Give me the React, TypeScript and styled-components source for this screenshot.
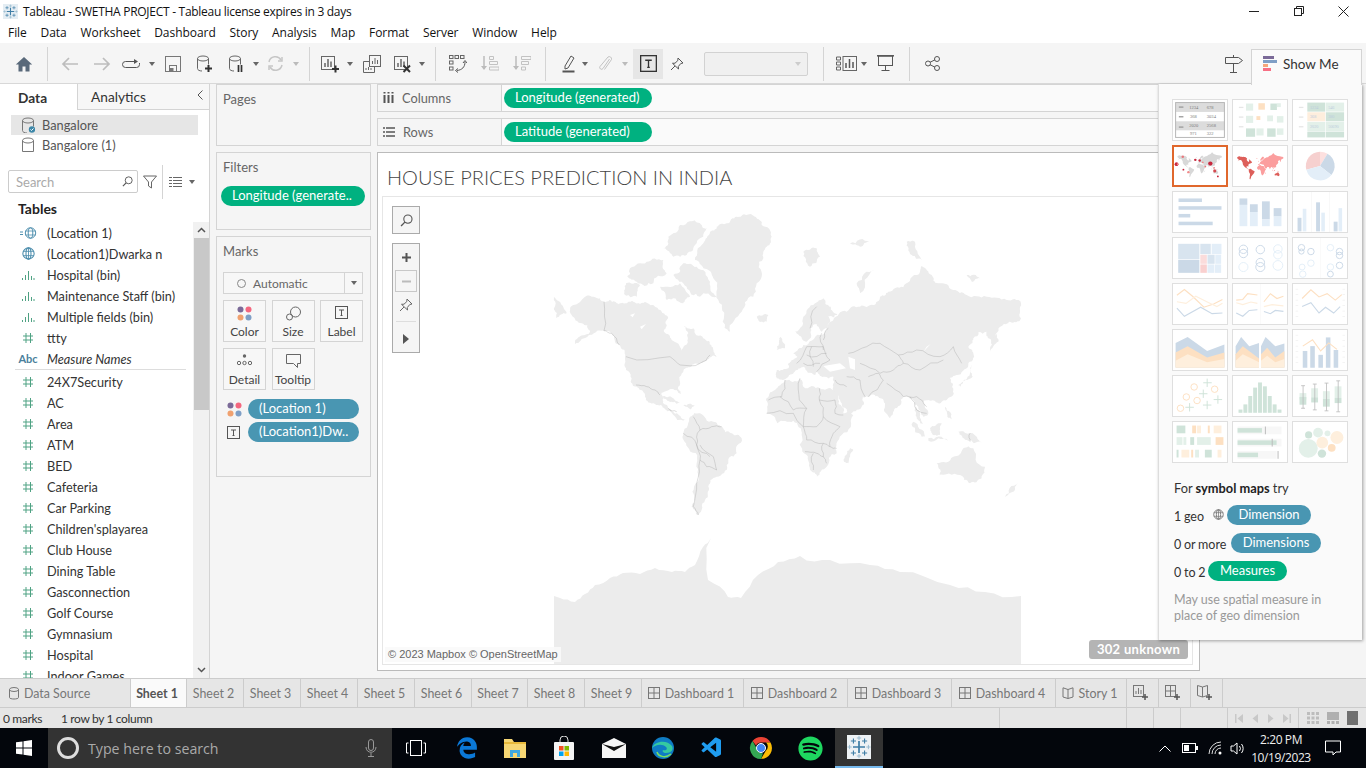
import React from "react";
import styled, { createGlobalStyle } from "styled-components";
import { FaSpotify, FaEdgeLegacy } from "react-icons/fa";
import { VscVscode } from "react-icons/vsc";

const Global = createGlobalStyle`
  html, body { margin: 0; padding: 0; background: #f5f5f5; }
  * { box-sizing: border-box; }
`;
const BOOK = `Lato, "Open Sans", sans-serif`;
const SEGOE = `"Open Sans", "Noto Sans", sans-serif`;

const Page = styled.div`
  width: 1366px; height: 768px; position: relative; overflow: hidden;
  display: flex; flex-direction: column; background: #f5f5f5; font-family: ${BOOK}; color: #333;
`;
const TitleBar = styled.div`
  height: 22px; background: #fff; display: flex; align-items: center; padding-left: 3px;
  font: 12px ${SEGOE}; color: #111; flex: none; letter-spacing: -0.28px;
`;
const TitleLogo = styled.div` width: 15px; height: 15px; background: #e4edf3; flex: none; `;
const TitleText = styled.span` margin-left: 5px; `;
const WinControls = styled.div` margin-left: auto; display: flex; align-items: center; `;
const WinBtn = styled.div` width: 45px; height: 22px; display: flex; align-items: center; justify-content: center; `;
const MenuBar = styled.div`
  height: 21px; background: #fff; display: flex; align-items: center; padding-left: 8px; gap: 13.8px;
  font: 12px ${SEGOE}; color: #111; flex: none; letter-spacing: -0.05px;
`;
const Toolbar = styled.div`
  height: 41px; background: #f5f5f5; display: flex; align-items: center; padding: 1px 0 0 8px; flex: none;
  border-bottom: 1px solid #d8d8d8; position: relative;
`;
const Slot = styled.div<{ $w: number; $ml?: number; $on?: boolean }>`
  width: ${p => p.$w}px; height: 30px; margin-left: ${p => p.$ml || 0}px; flex: none;
  display: flex; align-items: center; justify-content: center; background: ${p => (p.$on ? "#e6e6e6" : "transparent")};
`;
const Sep = styled.div<{ $ml: number; $mr: number }>`
  width: 1px; height: 34px; background: #d4d4d4; margin: 0 ${p => p.$mr}px 0 ${p => p.$ml}px; flex: none;
`;
const Caret = styled.div<{ $c?: string }>`
  width: 0; height: 0; border-left: 3.5px solid transparent; border-right: 3.5px solid transparent;
  border-top: 4px solid ${p => p.$c || "#666"};
`;
const Combo = styled.div`
  width: 104px; height: 24px; margin-left: 13px; border: 1px solid #d2d2d2; border-radius: 2px; background: #f0f0f0;
  display: flex; align-items: center; justify-content: flex-end; padding-right: 6px; flex: none;
`;
const Workspace = styled.div` height: 594px; display: flex; flex: none; `;
const DataPane = styled.div`
  width: 210px; background: #fff; border-right: 1px solid #d4d4d4; display: flex; flex-direction: column; flex: none;
`;
const PaneTabs = styled.div` height: 26px; display: flex; flex: none; `;
const PaneTab = styled.div<{ $on?: boolean; $w: number }>`
  width: ${p => p.$w}px; display: flex; align-items: center; font-size: 13.7px; padding-left: ${p => (p.$on ? 18 : 13)}px;
  font-weight: ${p => (p.$on ? 700 : 400)}; color: #333; background: ${p => (p.$on ? "#fff" : "#f7f7f7")};
  border-bottom: ${p => (p.$on ? "none" : "1px solid #d4d4d4")};
  border-left: ${p => (p.$on ? "none" : "1px solid #d4d4d4")}; position: relative;
`;
const Chevron = styled.div` position: absolute; right: 5px; top: 5px; display: flex; `;
const Sources = styled.div` padding: 5px 11px 0; height: 60px; flex: none; `;
const SourceRow = styled.div<{ $on?: boolean }>`
  height: 20px; width: 187px; display: flex; align-items: center; gap: 7px; padding-left: 10px; font-size: 12.8px; color: #555;
  background: ${p => (p.$on ? "#e6e6e6" : "transparent")};
`;
const SearchRow = styled.div` display: flex; align-items: center; padding-left: 8px; height: 23px; flex: none; `;
const SearchBox = styled.div`
  width: 130px; height: 23px; border: 1px solid #ccc; border-radius: 2px; display: flex; align-items: center;
  justify-content: space-between; padding: 0 4px 0 7px; color: #aaa; font-size: 13px; background: #fff;
`;
const TablesHead = styled.div` font-weight: 700; font-size: 14px; color: #222; padding: 7px 0 0 18px; height: 29px; flex: none; `;
const FieldArea = styled.div` flex: 1; display: flex; min-height: 0; overflow: hidden; `;
const FieldList = styled.div` width: 193px; flex: none; padding-top: 0; `;
const FieldRow = styled.div<{ $i?: boolean }>`
  height: 21px; display: flex; align-items: center; font-size: 12.7px; color: #333; white-space: nowrap;
  font-style: ${p => (p.$i ? "italic" : "normal")};
`;
const FieldIcon = styled.div` width: 47px; flex: none; display: flex; justify-content: center; padding-left: 9px; padding-right: 0; `;
const AbcIcon = styled.span` font-size: 11px; font-weight: 700; font-style: normal; color: #4a7f9c; `;
const FieldDivider = styled.div` height: 1px; background: #ddd; margin: 0 7px 1px 15px; `;
const ScrollBar = styled.div` width: 16px; background: #f1f1f1; flex: none; display: flex; flex-direction: column; align-items: center; `;
const ScrollEnd = styled.div` height: 16px; display: flex; align-items: center; justify-content: center; flex: none; `;
const ScrollThumb = styled.div` width: 15px; height: 172px; background: #c8c8c8; flex: none; `;
const ScrollRest = styled.div` flex: 1; `;
const ShelfCol = styled.div` width: 155px; margin-left: 6px; display: flex; flex-direction: column; gap: 6px; flex: none; `;
const Card = styled.div<{ $h: number }>`
  height: ${p => p.$h}px; border: 1px solid #d4d4d4; background: #f5f5f5; padding: 6px 4px 0 6px; flex: none;
`;
const CardTitle = styled.div` font-size: 13px; color: #666; padding-left: 0; line-height: 16px; `;
const Pill = styled.div<{ $c: "g" | "b"; $w: number }>`
  width: ${p => p.$w}px; height: 20px; border-radius: 10px; flex: none; color: #fff; font-size: 13px; line-height: 19px;
  padding-left: 11px; white-space: nowrap; overflow: hidden; background: ${p => (p.$c === "g" ? "#00b180" : "#4996b2")};
`;
const FilterPillWrap = styled.div` margin: 11px 0 0 -2px; `;
const MarkType = styled.div`
  margin: 13px 0 0 0; width: 140px; height: 22px; border: 1px solid #d4d4d4; background: #f7f7f7; display: flex; align-items: center;
  font-size: 12px; color: #666; padding-left: 13px; gap: 7px; position: relative;
`;
const MarkDrop = styled.div`
  position: absolute; right: 0; top: 0; bottom: 0; width: 18px; border-left: 1px solid #d4d4d4; display: flex; align-items: center; justify-content: center;
`;
const MarkCircle = styled.div` width: 9px; height: 9px; border: 1px solid #888; border-radius: 50%; `;
const MarkGrid = styled.div` display: grid; grid-template-columns: 43px 43px 43px; column-gap: 5.5px; row-gap: 6px; margin-top: 6px; `;
const MarkBtn = styled.div`
  height: 42px; border: 1px solid #d4d4d4; background: #f7f7f7; display: flex; flex-direction: column; align-items: center;
  font-size: 12px; color: #444; padding-top: 5px; justify-content: space-between; padding-bottom: 2px;
`;
const MarkPills = styled.div` margin-top: 9px; display: flex; flex-direction: column; gap: 3px; `;
const MarkPillRow = styled.div` display: flex; align-items: center; gap: 0; `;
const MarkPillIcon = styled.div` width: 25px; padding-left: 4px; display: flex; flex: none; `;
const Right = styled.div` width: 823px; margin-left: 6px; display: flex; flex-direction: column; flex: none; `;
const Shelf = styled.div<{ $mb: number }>`
  height: 28px; margin-bottom: ${p => p.$mb}px; border: 1px solid #d4d4d4; background: #fafafa; display: flex; flex: none; width: 900px;
`;
const ShelfLabel = styled.div`
  width: 124px; background: #f5f5f5; border-right: 1px solid #d4d4d4; display: flex; align-items: center; font-size: 12.8px; color: #666; gap: 8px; padding-left: 5px; padding-bottom: 1px; flex: none;
`;
const ShelfPills = styled.div` display: flex; align-items: center; padding-left: 2px; `;
const View = styled.div`
  height: 519px; background: #fff; border: 1px solid #bbb; display: flex; flex-direction: column; padding: 0 6px 5px 4px; flex: none;
`;
const ViewTitle = styled.div` height: 43px; flex: none; padding: 12px 0 0 5px; font-size: 20px; font-weight: 300; color: #444; line-height: 24px; white-space: nowrap; `;
const MapFrame = styled.div` flex: 1; border: 1px solid #e6e6e6; position: relative; overflow: hidden; `;
const MapSvg = styled.svg` position: absolute; left: 157px; top: 3px; filter: blur(.35px); `;
const MapTool = styled.div`
  position: absolute; left: 9px; width: 28px; border: 1px solid #aaa; background: #f5f5f5; display: flex; flex-direction: column; align-items: center;
`;
const MapToolSearch = styled(MapTool)` top: 9px; height: 28px; justify-content: center; `;
const MapToolGroup = styled(MapTool)` top: 46px; height: 110px; `;
const ToolCell = styled.div<{ $h: number; $box?: boolean }>`
  height: ${p => p.$h}px; width: ${p => (p.$box ? "22px" : "100%")}; display: flex; align-items: center; justify-content: center;
  border: ${p => (p.$box ? "1px solid #c8c8c8" : "none")}; flex: none;
`;
const ToolRule = styled.div` width: 20px; height: 1px; background: #ddd; margin: 4px 0 4px; flex: none; `;
const Attribution = styled.div`
  position: absolute; left: 2px; bottom: 2px; height: 15px; padding: 0 3px; background: rgba(250,250,250,.9);
  font: 11px/15px "Liberation Sans", Arial, sans-serif; color: #666;
`;
const Unknown = styled.div`
  position: absolute; right: 4px; bottom: 5px; width: 99px; height: 19px; background: #b4b4b4; border-radius: 3px;
  color: #fff; font-weight: 700; font-size: 13px; line-height: 18px; text-align: center; letter-spacing: .3px;
`;
const ShowMeTab = styled.div`
  position: absolute; left: 1251px; top: 49px; width: 111px; height: 36px; background: #fafafa; border: 1px solid #d4d4d4;
  border-bottom: none; display: flex; align-items: center; padding: 0 0 8px 11px; gap: 5px; font-size: 13.5px; color: #333; z-index: 3;
`;
const ShowMePanel = styled.div`
  position: absolute; left: 1158px; top: 84px; width: 204px; height: 556px; background: #fafafa;
  box-shadow: 1px 1px 3px rgba(0,0,0,.35); border-left: 1px solid #ddd; padding: 15px 0 0 13px; z-index: 2; font-size: 13px; color: #333;
`;
const ThumbGrid = styled.div` display: grid; grid-template-columns: repeat(3, 56px); grid-auto-rows: 42px; gap: 4px; `;
const Thumb = styled.div<{ $on?: boolean }>`
  border: ${p => (p.$on ? "2px solid #e0672c" : "1px solid #dfdfdf")}; background: #fff; overflow: hidden; display: flex;
`;
const ThumbSvg = styled.svg` width: 100%; height: 100%; display: block; `;
const HintHead = styled.div` margin: 17px 0 0 2px; font-size: 12.8px; line-height: 17px; color: #333; `;
const Strong = styled.b` font-weight: 700; color: #222; `;
const HintRow = styled.div` display: flex; align-items: center; height: 20px; margin: 8px 0 0 2px; color: #333; font-size: 12.5px; `;
const HintLabel = styled.span<{ $w: number }>` width: ${p => p.$w}px; flex: none; padding-top: 3px; display: flex; align-items: center; white-space: nowrap; word-spacing: -.5px; `;
const HintGlobe = styled.span` margin-left: 9px; margin-top: -4px; `;
const HintPill = styled.div<{ $c: "g" | "b"; $w: number }>`
  width: ${p => p.$w}px; height: 20px; border-radius: 10px; color: #fff; text-align: center; line-height: 19px; font-size: 13px;
  background: ${p => (p.$c === "g" ? "#00b180" : "#4996b2")};
`;
const Note = styled.div` margin: 11px 0 0 2px; width: 170px; color: #999; font-size: 12.5px; line-height: 16px; `;
const SheetTabs = styled.div`
  height: 30px; display: flex; background: #e6e6e6; border-top: 1px solid #ccc; border-bottom: 1px solid #ccc; flex: none;
`;
const SheetTab = styled.div<{ $w: number; $on?: boolean }>`
  width: ${p => p.$w}px; flex: none; display: flex; align-items: center; justify-content: center; gap: 5px; font-size: 12.4px; padding-right: 3px;
  border-right: 1px solid #ccc; color: ${p => (p.$on ? "#555" : "#777")}; font-weight: ${p => (p.$on ? 700 : 400)};
  background: ${p => (p.$on ? "#fafafa" : "transparent")}; white-space: nowrap;
`;
const SourceTab = styled(SheetTab)` justify-content: flex-start; padding-left: 9px; `;
const StatusBar = styled.div` height: 20px; background: #e6e6e6; display: flex; align-items: center; flex: none; font-size: 12px; color: #333; letter-spacing: -.35px; `;
const StatusText = styled.span<{ $w: number }>` width: ${p => p.$w}px; flex: none; padding-left: 3px; white-space: nowrap; `;
const StatusCell = styled.div<{ $w: number }>`
  width: ${p => p.$w}px; height: 20px; border-left: 1px solid #ccc; flex: none; display: flex; align-items: center; justify-content: center; gap: 8px;
`;
const Taskbar = styled.div` height: 40px; background: #03060c; display: flex; align-items: center; flex: none; color: #fff; `;
const StartBtn = styled.div` width: 48px; height: 40px; display: flex; align-items: center; justify-content: center; flex: none; `;
const TaskSearch = styled.div`
  width: 344px; height: 40px; background: #333; display: flex; align-items: center; padding-left: 9px; color: #aaa;
  font: 14.2px ${SEGOE}; flex: none; position: relative;
`;
const Cortana = styled.div` width: 22px; height: 22px; border-radius: 50%; border: 3px solid #ddd; margin-right: 9px; `;
const MicWrap = styled.div` position: absolute; right: 15px; top: 11px; display: flex; `;
const TaskIcon = styled.div<{ $w: number; $ml?: number; $on?: boolean }>`
  width: ${p => p.$w}px; margin-left: ${p => p.$ml || 0}px; height: 40px; display: flex; align-items: center; justify-content: center; flex: none;
  background: ${p => (p.$on ? "#333" : "transparent")}; border-bottom: ${p => (p.$on ? "2px solid #76b9ed" : "none")};
`;
const Tray = styled.div` margin-left: auto; display: flex; align-items: center; `;
const TrayIcon = styled.div<{ $w: number }>` width: ${p => p.$w}px; display: flex; justify-content: center; flex: none; `;
const Clock = styled.div` width: 68px; padding-top: 1px; text-align: center; font: 12px/18px ${SEGOE}; color: #eee; letter-spacing: -.4px; flex: none; `;
const Notify = styled.div` width: 36px; margin-right: 15px; display: flex; justify-content: center; flex: none; `;

/* ------------- icons ------------- */
const Svg: React.FC<{ w: number; h?: number; children?: React.ReactNode; vb?: string }> = ({ w, h, children, vb }) => (
  <svg width={w} height={h || w} viewBox={vb || `0 0 ${w} ${h || w}`} fill="none" style={{ display: "block", flex: "none" }}>{children}</svg>
);
const TableauLogo: React.FC<{ s: number; c?: string }> = ({ s, c = "#5b8fb0" }) => (
  <svg width={s} height={s} viewBox="0 0 28 28" style={{ display: "block" }}>
    <g stroke={c} fill="none">
      <path d="M14 7v14M7 14h14" strokeWidth="2" />
      <path d="M7.5 4v6M4.5 7h6M20.500 4v6M17.500 7h6M7.500 18v6M4.500 21h6M20.500 18v6M17.500 21h6" strokeWidth="1.300" />
      <path d="M14 1v5M11.500 3.500h5M14 22v5M11.500 24.500h5M3 11.500v5M.5 14h5M25 11.500v5M22.500 14h5" strokeWidth="1" stroke="#8fb4cb" />
    </g>
  </svg>
);
const Cyl: React.FC<{ c?: string }> = ({ c = "#666" }) => (
  <><ellipse cx="7" cy="3.500" rx="5.500" ry="2.500" stroke={c} /><path d={`M1.500 3.500v10c0 1.500 2 2.500 4.500 2.500M12.500 3.500v6`} stroke={c} /></>
);
const Hash: React.FC = () => (
  <Svg w={12}><path d="M4 1v10M8.500 1v10M1 4h10M1 8h10" stroke="#4fa283" strokeWidth="1" /></Svg>
);
const Globe: React.FC<{ s?: number; c?: string }> = ({ s = 12, c = "#4f8fae" }) => (
  <svg width={s} height={s} viewBox="0 0 12 12" fill="none" style={{ display: "block" }}>
    <circle cx="6" cy="6" r="5.200" stroke={c} /><ellipse cx="6" cy="6" rx="2.300" ry="5.200" stroke={c} /><path d="M1 4h10M1 8h10M6 .8v10.400" stroke={c} strokeWidth=".8" />
  </svg>
);
const BinIcon: React.FC = () => (
  <Svg w={14} h={10}><path d="M1.500 8v2M4.500 5v5M7.500 1v9M10.500 6v4M13 8v2" stroke="#4fa283" /></Svg>
);
const Dots4: React.FC = () => (
  <Svg w={15}><circle cx="3.500" cy="3.500" r="3" fill="#7b6a98" /><circle cx="11.500" cy="3.500" r="3" fill="#f4677f" /><circle cx="3.500" cy="11.500" r="3" fill="#f0a170" /><circle cx="11.500" cy="11.500" r="3" fill="#7f9fc6" /></Svg>
);
const TBox: React.FC<{ s?: number; c?: string }> = ({ s = 13, c = "#555" }) => (
  <svg width={s} height={s} viewBox="0 0 13 13" fill="none" style={{ display: "block" }}>
    <rect x=".5" y=".5" width="12" height="12" stroke={c} /><path d="M4 4h5M6.500 4v5.500M5.500 9.500h2" stroke={c} />
  </svg>
);
const Pin: React.FC<{ c?: string }> = ({ c = "#555" }) => (
  <Svg w={14}><path d="M8 1l5 5-2.200.5-2.500 3 .2 2.500L2.500 6.300 5 6.200 7.800 3.600zM5 9l-4 4" stroke={c} /></Svg>
);
const Magnifier: React.FC<{ c?: string; s?: number }> = ({ c = "#555", s = 12 }) => (
  <svg width={s} height={s} viewBox="0 0 12 12" fill="none" style={{ display: "block" }}><circle cx="7.300" cy="4.700" r="3.800" stroke={c} /><path d="M4.500 7.500L1 11" stroke={c} strokeWidth="1.300" /></svg>
);
const Plus: React.FC<{ x: number; y: number; c?: string }> = ({ x, y, c = "#333" }) => (
  <path d={`M${x - 3.5} ${y}h7M${x} ${y - 3.5}v7`} stroke={c} strokeWidth="2" />
);
const WSheet: React.FC = () => (
  <><rect x="1.500" y="1.500" width="13" height="13" stroke="#666" /><path d="M5 12V8M8 12V4M11 12V6.500" stroke="#666" strokeWidth="1.500" /></>
);

const Home = () => <Svg w={18} h={16}><path d="M9 1L0.800 8.500H3.500V15.500H7.500V10.500H10.500V15.500H14.500V8.500H17.200z" fill="#59697a" /></Svg>;
const Back = () => <Svg w={18} h={14}><path d="M17 7H2M8 1L2 7l6 6" stroke="#bdbdbd" strokeWidth="1.700" /></Svg>;
const Fwd = () => <Svg w={18} h={14}><path d="M1 7h15M10 1l6 6-6 6" stroke="#bdbdbd" strokeWidth="1.700" /></Svg>;
const Loop = () => <Svg w={20} h={12}><path d="M13 3.500H4.500a3 3 0 000 6h11a3 3 0 003-3V5" stroke="#555" /><path d="M13 1v5l4-2.500z" fill="#555" /></Svg>;
const Save = () => <Svg w={16}><rect x=".5" y=".5" width="15" height="15" stroke="#777" /><rect x="4.500" y="9.500" width="7" height="6" stroke="#777" /><rect x="4.500" y="12" width="4" height="3" fill="#777" /></Svg>;
const NewDs = () => <Svg w={18} h={18}><Cyl /><Plus x={12.500} y={13.500} /></Svg>;
const PauseDs = () => <Svg w={16} h={18}><Cyl /><path d="M10.500 10v7M13.500 10v7" stroke="#333" strokeWidth="1.700" /></Svg>;
const Refresh = () => <Svg w={17}><path d="M2 7a6.500 6.500 0 0112-2M15 10a6.500 6.500 0 01-12 2" stroke="#c6c6c6" strokeWidth="1.500" /><path d="M15 2v4h-4M2 15v-4h4" stroke="#c6c6c6" strokeWidth="1.500" /></Svg>;
const NewWs = () => <Svg w={20} h={18}><WSheet /><Plus x={15.500} y={14} /></Svg>;
const Dup = () => <Svg w={18}><rect x="6.500" y=".5" width="11" height="11" stroke="#666" fill="#f5f5f5" /><path d="M9.500 9V6M12 9V3M14.500 9V5" stroke="#666" /><path d="M6 6.500H.5v11h11V12" stroke="#666" /><path d="M3 15v-2M5.500 15v-3M8 15v-2" stroke="#666" /></Svg>;
const Clear = () => <Svg w={18}><WSheet /><path d="M10.500 10.500l6.500 6.500M17 10.500L10.500 17" stroke="#333" strokeWidth="2" /></Svg>;
const Swap = () => <Svg w={18}><rect x=".5" y=".5" width="3.500" height="3" stroke="#666" /><rect x="6" y=".5" width="3.500" height="3" stroke="#666" /><rect x="11.500" y=".5" width="3.500" height="3" stroke="#666" /><rect x=".5" y="6" width="3.500" height="3" stroke="#666" /><rect x=".5" y="12" width="3.500" height="3" stroke="#666" /><path d="M16 7c0 5-3 8-8 8.500" stroke="#555" /><path d="M14 8l2-2.500L18 8M9 13.500L6.500 15.500 9 17.500" stroke="#555" /></Svg>;
const SortA = () => <Svg w={18}><path d="M3 1v13" stroke="#bbb" strokeWidth="1.500" /><path d="M0 11l3 4 3-4z" fill="#bbb" /><path d="M8.500 1.500h4v3h-4zM8.500 6.500h8v3h-8zM8.500 12h9.500v3H8.500z" stroke="#c2c2c2" /></Svg>;
const SortD = () => <Svg w={18}><path d="M3 1v13" stroke="#bbb" strokeWidth="1.500" /><path d="M0 11l3 4 3-4z" fill="#bbb" /><path d="M8.500 1.500h9.500v3H8.500zM8.500 6.500h7v3h-7zM8.500 12h4v3h-4z" stroke="#c2c2c2" /></Svg>;
const Marker = () => <Svg w={13} h={19}><path d="M3 12l6-10 3 2-6 10-3 1z" stroke="#555" /><path d="M.5 17.500h12" stroke="#555" strokeWidth="2" /></Svg>;
const Clip = () => <Svg w={13} h={17}><path d="M10.500 4L4 13.500a1.800 1.800 0 01-3-2L9 2a2.300 2.300 0 013.500 2.500l-7 10" stroke="#c2c2c2" /></Svg>;
const Cards = () => <Svg w={21} h={15}><path d="M.5 1h4v3h-4zM.5 6h4v3h-4zM.5 11h4v3h-4z" stroke="#666" /><rect x="7" y=".5" width="13.500" height="14" stroke="#666" /><path d="M10 12V7M13.500 12V3M17 12V6" stroke="#555" strokeWidth="1.500" /></Svg>;
const Present = () => <Svg w={17}><path d="M0 .8h17" stroke="#555" strokeWidth="1.500" /><rect x="1.500" y="1" width="14" height="9.500" stroke="#555" /><path d="M8.500 10.500V15M4.500 15.500h8" stroke="#555" /></Svg>;
const Share = () => <Svg w={15}><circle cx="3" cy="7.500" r="2.500" stroke="#555" /><circle cx="12" cy="3" r="2.500" stroke="#555" /><circle cx="12" cy="12" r="2.500" stroke="#555" /><path d="M5 6.300L10 3.800M5 8.700l5 2.500" stroke="#555" /></Svg>;
const SignPost = () => <Svg w={18}><path d="M.5 2.500h13l4 3-4 3H.5z" stroke="#555" /><path d="M8.500 0v2.500M8.500 8.500V17M5 17.500h7" stroke="#555" /></Svg>;

/* ------------- map data ------------- */
const LAND = [
  "42,290 60,305 80,340 50,355 42,330",
  "95,318 130,295 165,292 192,305 225,305 250,310 275,303 300,312 320,308 345,320 365,335 385,350 378,372 372,395 395,420 425,452 442,430 445,400 430,375 460,385 490,415 515,440 530,470 505,478 480,490 452,500 430,515 420,545 425,585 410,570 390,568 365,578 368,600 385,625 410,640 440,658 430,662 400,645 375,628 345,612 315,590 292,562 272,545 258,510 255,470 238,435 215,400 195,392 165,398 140,412 105,432 135,405 150,392 125,370 95,345",
  "510,95 530,80 560,70 590,50 620,45 650,55 665,75 695,110 680,140 670,175 665,230 640,290 605,335 570,395 548,365 535,300 520,235 490,205 465,180 490,130",
  "385,110 420,75 445,65 480,70 500,85 470,130 440,165 400,170 370,145",
  "430,190 470,200 510,245 530,290 480,290 440,260 400,225",
  "270,205 320,185 370,180 380,220 340,250 290,245 262,230",
  "258,250 300,255 290,290 255,285",
  "360,260 420,250 450,290 430,310 380,300",
  "365,590 400,595 425,610 395,605",
  "430,615 465,618 450,628",
  "450,650 480,640 520,665 545,680 575,700 605,715 590,760 560,795 530,830 505,860 495,900 475,945 455,920 462,860 470,790 442,740 430,700",
  "735,540 780,535 790,560 840,565 880,570 895,610 910,640 940,645 905,705 890,760 860,800 830,832 810,810 792,760 785,705 760,662 712,670 680,640 678,600 705,570",
  "930,745 940,750 925,790 912,785",
  "765,395 790,350 825,310 850,295 872,320 892,345 865,348 862,385 845,395 830,372 812,385 800,425 785,415",
  "760,460 790,435 840,405 860,385 880,360 920,335 960,320 1000,315 1020,290 1045,275 1090,262 1130,225 1145,198 1175,225 1195,250 1240,270 1280,285 1340,290 1400,300 1443,310 1443,355 1410,365 1385,378 1365,420 1352,455 1345,415 1340,395 1300,415 1285,440 1300,460 1285,495 1250,525 1230,535 1240,570 1220,600 1195,610 1165,600 1150,605 1165,640 1150,650 1135,620 1120,600 1090,590 1065,625 1050,655 1035,610 1015,590 985,590 968,590 965,620 925,640 900,600 880,560 880,530 855,530 830,515 825,525 790,500 772,510 745,530 710,535 710,510 745,505 755,480 772,470",
  "1125,620 1140,640 1150,675 1135,660",
  "1190,790 1240,770 1270,745 1300,745 1335,800 1325,835 1290,850 1260,825 1195,830",
  "1120,665 1155,710 1145,710 1115,675",
  "1170,685 1205,670 1200,705 1180,705",
  "1255,695 1310,710 1325,728 1280,720",
  "1165,715 1225,722 1165,722",
  "1255,555 1290,520 1295,495 1298,530 1262,560",
  "1350,450 1372,400 1375,425",
  "720,410 735,445 710,450 718,430",
  "650,350 685,345 680,365 660,365",
  "1395,890 1435,850 1420,875",
  "790,155 830,145 840,170 810,200",
  "950,250 1005,210 960,280",
  "1100,125 1125,125 1145,180 1115,165",
  "1215,620 1235,660 1222,650",
  "1280,225 1320,235 1295,245",
  "930,130 990,125 960,140",
];
const WATER = ["850,498 900,490 918,505 870,515", "925,470 945,478 945,510 930,505", "380,335 405,345 398,365 385,355", "1160,440 1172,432 1150,455", "270,345 285,340 278,352", "300,380 318,372 305,388"];
const BORDERS = [
  "192,305 192,392 215,400 238,435", "258,470 390,470 420,495 480,490 510,465", "288,555 320,560 345,570 360,585", "385,625 410,635",
  "460,650 480,690 515,680 545,680", "430,700 470,735 480,780 470,850 460,920 475,945", "480,690 470,735", "480,735 520,770 530,810 500,800 480,780", "470,735 510,770",
  "735,540 725,590 685,600", "780,535 778,600 800,625 760,630 720,590", "838,565 838,600 885,600", "800,625 790,680 830,680 850,650 838,600", "680,640 760,640 790,680", "885,600 885,640 910,645", "850,650 900,680 880,700 870,740 890,745", "790,680 800,720 850,730 870,740", "795,755 830,760 850,770 860,790", "820,760 820,810", "850,730 850,770",
  "770,490 800,440 850,440 870,480 830,515", "800,465 860,460", "790,490 840,490", "815,440 820,500", "845,400 850,450", "865,385 850,420", "830,320 810,385",
  "925,460 980,440 1020,430 1075,465 1130,450 1200,470 1240,440 1265,490", "1075,465 1090,490 1140,510 1210,480", "960,490 1020,520 1060,510 1090,490", "985,530 1015,520 1030,540 985,590", "1040,550 1090,590 1130,590 1160,620", "1110,590 1130,630 1160,640", "920,530 960,540 975,590", "885,540 920,560", "1290,700 1290,725",
];
const ANTARCTICA = "554,596 560,598 575,602 585,594 595,585 610,578 623,573 640,574 655,568 672,572 685,572 695,565 703,547 711,538 708,580 728,597 741,598 758,575 778,562 800,556 830,560 870,565 900,572 950,585 985,592 1021,596 1021,664 554,664";

/* coastlines: midpoint displacement so the hand-placed outlines read as natural edges */
const rough = (pts: string, closed: boolean, amp: number, depth: number) => {
  let a = pts.split(" ").map(s => s.split(",").map(Number));
  let seed = a.length * 7 + 3;
  const rnd = () => { seed = (seed * 9301 + 49297) % 233280; return seed / 233280 - 0.5; };
  for (let d = 0; d < depth; d++) {
    const out: number[][] = [];
    const n = closed ? a.length : a.length - 1;
    for (let i = 0; i < n; i++) {
      const p = a[i], q = a[(i + 1) % a.length];
      const dx = q[0] - p[0], dy = q[1] - p[1];
      const k = rnd() * amp;
      out.push(p, [(p[0] + q[0]) / 2 - dy * k, (p[1] + q[1]) / 2 + dx * k]);
    }
    if (!closed) out.push(a[a.length - 1]);
    a = out;
  }
  return a.map(p => `${p[0].toFixed(1)},${p[1].toFixed(1)}`).join(" ");
};
const LAND_R = LAND.map(p => rough(p, true, 0.45, 3));
const BORDERS_R = BORDERS.map(p => rough(p, false, 0.3, 2));
const ANT_TOP = ANTARCTICA.split(" ").slice(0, -2).join(" ");
const ANT_R = `${rough(ANT_TOP, false, 0.25, 2)} 1021,664 554,664`;

const WorldMap = () => (
  <MapSvg width={500} height={466} viewBox="540 200 500 466">
    <g transform="translate(540 200) scale(.33333)">
      {LAND_R.map((p, i) => <polygon key={i} points={p} fill="#ececec" />)}
      {WATER.map((p, i) => <polygon key={i} points={p} fill="#fff" />)}
      {BORDERS_R.map((p, i) => <polyline key={i} points={p} fill="none" stroke="#a2a2a2" strokeWidth="1.100" />)}
    </g>
    <polygon points={ANT_R} fill="#ececec" />
  </MapSvg>
);

/* ------------- show me thumbnails, in 166x124 units ------------- */
const R = (a: [number, number, number, number, string][]) => a.map(([x, y, w, h, f], i) => <rect key={i} x={x} y={y} width={w} height={h} fill={f} />);
const L: React.FC<{ p: string; c: string; w?: number }> = ({ p, c, w = 3.500 }) => <polyline points={p} fill="none" stroke={c} strokeWidth={w} />;
const G1 = "#cfe3d9", G2 = "#e3f0e9", O1 = "#fde0c2", O2 = "#feefdd", B1 = "#cbd9e7", B2 = "#e3eef8";
const MINI = LAND.filter((_, i) => [1, 10, 11, 12, 13, 14, 16, 17, 18, 19, 22, 23, 24].includes(i));
const Ticks: React.FC<{ x: number }> = ({ x }) => (
  <>{[15, 32, 49, 66, 83, 100].map(y => <rect key={y} x={x} y={y} width="8" height="2" fill="#eee" />)}</>
);
const TH: React.FC<{ children: React.ReactNode; on?: boolean }> = ({ children, on }) => (
  <Thumb $on={on}><ThumbSvg viewBox="0 0 166 124" preserveAspectRatio="none">{children}</ThumbSvg></Thumb>
);
const thumbs: React.ReactNode[] = [
  <TH key="0">
    {R([[8, 8, 150, 29, "#dcdcdc"], [8, 66, 150, 28, "#dcdcdc"], [18, 20, 14, 4, "#999"], [18, 50, 14, 4, "#999"], [18, 82, 14, 4, "#999"]])}
    <rect x="8" y="8" width="150" height="108" fill="none" stroke="#b5b5b5" strokeWidth="3" />
    <g fontSize="14" fill="#777" fontFamily="Liberation Serif, serif">
      <text x="50" y="28">1234</text><text x="104" y="28">678</text><text x="52" y="57">368</text><text x="104" y="57">3034</text>
      <text x="50" y="85">2020</text><text x="104" y="85">2568</text><text x="52" y="110">971</text><text x="104" y="110">322</text>
    </g>
  </TH>,
  <TH key="1">
    {R([[18, 21, 14, 4, "#e6e6e6"], [18, 51, 14, 4, "#e6e6e6"], [18, 81, 14, 4, "#e6e6e6"], [40, 11, 22, 22, G2], [78, 10, 20, 20, O1], [115, 11, 20, 20, G1], [135, 10, 12, 12, G2], [40, 49, 22, 22, G2], [72, 50, 12, 12, O1], [105, 48, 18, 18, G2], [135, 50, 20, 20, G2], [40, 88, 28, 26, G1], [72, 88, 22, 22, G2], [105, 88, 26, 26, G1], [135, 88, 20, 20, G2]])}
  </TH>,
  <TH key="2">
    {R([[18, 21, 14, 4, "#e6e6e6"], [18, 51, 14, 4, "#e6e6e6"], [18, 81, 14, 4, "#e6e6e6"], [44, 8, 55, 28, G1], [101, 8, 56, 28, G2], [44, 38, 55, 28, "#feeedd"], [101, 38, 56, 28, G1], [44, 68, 55, 28, G2], [101, 68, 56, 28, G2], [44, 98, 55, 18, G1], [101, 98, 56, 18, G1]])}
    <g fontSize="13" fill="#bcd" fontFamily="Liberation Serif, serif"><text x="52" y="27">1234</text><text x="108" y="27">546</text><text x="52" y="57">368</text><text x="108" y="57">380</text><text x="52" y="87">2020</text><text x="108" y="87">50690</text></g>
  </TH>,
  <TH key="3" on>
    <g transform="translate(1 -5) scale(.105 .11)">{MINI.map((p, i) => <polygon key={i} points={p} fill="#d8d8d8" />)}</g>
    {[[8, 56, 6, "#c8283e"], [12, 56, 3, "#f08a8a"], [28, 32, 4, "#e8787d"], [68, 42, 4, "#c8283e"], [82, 44, 4, "#c8283e"], [92, 50, 3, "#f08a8a"], [116, 54, 7, "#c8283e"], [128, 68, 3, "#f08a8a"], [130, 78, 5, "#d34a50"], [140, 96, 3, "#c8283e"], [30, 74, 3, "#c8283e"], [46, 82, 4, "#f08a8a"], [100, 64, 3, "#e8787d"]].map(([x, y, r, f], i) => <circle key={i} cx={x as number} cy={y as number} r={r as number} fill={f as string} />)}
  </TH>,
  <TH key="4">
    <g transform="translate(3 0) scale(.105 .11)">
      {MINI.map((p, i) => <polygon key={i} points={p} fill={i < 2 || i === 6 ? "#dd5f5a" : "#fb9e9e"} />)}
    </g>
  </TH>,
  <TH key="5">
    <path d="M83 62L83 18A44 44 0 0 0 41 74z" fill="#f6d0cf" /><path d="M83 62L83 18A44 44 0 0 1 106 24z" fill="#fde0df" />
    <path d="M83 62L106 24A44 44 0 0 1 118 90z" fill={B1} /><path d="M83 62L118 90A44 44 0 0 1 41 74z" fill={B2} />
  </TH>,
  <TH key="6">{R([[17, 20, 72, 11, B1], [17, 44, 132, 11, B1], [17, 68, 36, 11, B1], [17, 92, 105, 11, B1]])}</TH>,
  <TH key="7">{R([[20, 20, 24, 20, B1], [20, 40, 24, 66, B2], [52, 38, 24, 24, B1], [52, 62, 24, 44, B2], [89, 29, 24, 56, B1], [89, 85, 24, 21, B2], [125, 50, 24, 26, B1], [125, 76, 24, 30, B2]])}</TH>,
  <TH key="8">{R([[57, 0, 1, 124, "#e8e8e8"], [111, 0, 1, 124, "#e8e8e8"], [14, 80, 12, 42, B1], [30, 52, 11, 70, B2], [71, 32, 12, 90, B1], [87, 64, 11, 58, B2], [125, 92, 12, 30, B1], [140, 50, 11, 72, B2]])}</TH>,
  <TH key="9">{R([[16, 18, 65, 48, "#d8e4ef"], [84, 18, 32, 32, "#d8e4ef"], [119, 18, 30, 32, B2], [16, 68, 65, 40, B1], [84, 52, 20, 28, "#fbdcdb"], [106, 52, 22, 28, "#d8e4ef"], [130, 52, 18, 28, B2], [84, 82, 20, 26, "#f9d0cf"], [106, 82, 20, 26, B2], [128, 82, 20, 26, B2]])}</TH>,
  <TH key="10"><g fill="none" strokeWidth="3">{[[32, 35, 13, B1], [32, 48, 13, B1], [84, 36, 13, B1], [138, 34, 13, B2], [138, 52, 13, B2], [32, 90, 14, B2], [84, 76, 13, B1], [84, 90, 14, B1], [138, 85, 15, B2]].map(([x, y, r, c], i) => <circle key={i} cx={x as number} cy={y as number} r={r as number} stroke={c as string} />)}</g></TH>,
  <TH key="11"><rect x="85" y="0" width="1" height="124" fill="#eee" /><g fill="none" strokeWidth="3">{[[26, 30, 10, B1], [26, 42, 8, B1], [55, 42, 10, B1], [28, 90, 9, B2], [55, 78, 10, B2], [30, 112, 10, B2], [115, 30, 10, B2], [143, 42, 10, B1], [143, 54, 10, B1], [115, 90, 10, B2], [143, 85, 10, B1], [115, 112, 9, B1]].map(([x, y, r, c], i) => <circle key={i} cx={x as number} cy={y as number} r={r as number} stroke={c as string} />)}</g></TH>,
  <TH key="12"><L p="12,35 35,17 60,38 95,72 125,62 152,48" c={O1} /><L p="12,55 40,60 70,38 110,58 135,70 152,60" c={O2} /><L p="12,75 35,100 85,72 120,92 152,90" c={B1} /></TH>,
  <TH key="13"><rect x="85" y="0" width="1" height="124" fill="#eee" /><L p="10,50 30,48 45,30 75,34" c={O1} /><L p="10,58 30,64 55,56 75,60" c={O2} /><L p="10,90 30,100 50,82 75,80" c={B1} /><L p="95,55 115,30 135,45 155,38" c={O1} /><L p="95,70 120,64 155,68" c={O2} /><L p="95,85 115,92 130,82 155,85" c={B1} /></TH>,
  <TH key="14"><Ticks x={8} /><Ticks x={152} /><L p="28,45 55,18 80,40 105,30 130,50 150,33" c={O1} /><L p="28,70 55,58 80,90 100,72 125,90 145,70" c={B1} /></TH>,
  <TH key="15"><polygon points="8,40 45,22 105,65 158,45 158,116 8,116" fill={B1} /><polygon points="8,70 45,50 105,85 158,70 158,116 8,116" fill={O1} /><polygon points="8,95 45,75 105,100 158,90 158,116 8,116" fill={O2} /></TH>,
  <TH key="16"><polygon points="8,50 25,22 50,50 80,40 80,116 8,116" fill={B1} /><polygon points="8,75 30,50 80,88 80,116 8,116" fill={O1} /><polygon points="8,95 30,75 80,100 80,116 8,116" fill={O2} /><polygon points="86,50 100,22 130,50 158,42 158,116 86,116" fill={B1} /><polygon points="86,75 105,55 130,85 158,65 158,116 86,116" fill={O1} /><polygon points="86,95 105,80 130,100 158,90 158,116 86,116" fill={O2} /></TH>,
  <TH key="17"><Ticks x={8} /><Ticks x={152} />{R([[30, 65, 14, 52, B1], [53, 50, 14, 67, B1], [78, 77, 14, 40, B1], [101, 23, 14, 94, B1], [125, 62, 14, 55, B1]])}<L p="30,50 60,30 85,65 110,40 135,60" c={O1} /></TH>,
  <TH key="18">
    <g fill="none" stroke={O1} strokeWidth="3">{[[23, 100, 10], [65, 34, 10], [41, 65, 10], [74, 76, 10], [128, 41, 10]].map(([x, y, r], i) => <circle key={i} cx={x} cy={y} r={r} />)}</g>
    <path d="M105 8v26M93 21h26M93 42v26M80 55h26M138 60v26M125 73h26M51 84v26M38 97h26M105 77v26M92 90h26" stroke={G1} strokeWidth="3" fill="none" />
  </TH>,
  <TH key="19">{R([[17, 104, 12, 10, G1], [32, 88, 12, 26, G1], [47, 62, 12, 52, G1], [62, 36, 12, 78, G1], [77, 20, 12, 94, G1], [92, 32, 12, 82, G1], [107, 62, 12, 52, G1], [122, 88, 12, 26, G1], [137, 104, 12, 10, G1]])}</TH>,
  <TH key="20">
    {R([[20, 53, 21, 20, G2], [20, 65, 21, 24, G1], [56, 38, 21, 28, G2], [56, 66, 21, 16, G1], [92, 47, 21, 24, G2], [92, 71, 21, 24, G1], [128, 32, 21, 36, G2], [128, 68, 21, 16, G1]])}
    <path d="M31 30v70M25 30h12M25 100h12M67 25v80M61 25h12M61 105h12M103 22v86M97 22h12M97 108h12M139 15v96M133 15h12M133 111h12" stroke="#bbb" strokeWidth="2.500" fill="none" />
  </TH>,
  <TH key="21">{R([[11, 11, 27, 24, G1], [59, 11, 12, 24, O1], [74, 11, 12, 24, O2], [107, 11, 6, 24, O1], [125, 11, 24, 24, O2], [11, 47, 18, 24, G2], [32, 47, 9, 24, G2], [53, 47, 12, 24, G1], [74, 47, 42, 24, G2], [131, 47, 24, 24, O1], [11, 86, 6, 24, G1], [26, 86, 24, 24, O2], [56, 86, 6, 24, O1], [68, 86, 12, 24, G2], [98, 86, 21, 24, G1], [137, 86, 12, 24, O2]])}</TH>,
  <TH key="22">
    {R([[14, 14, 135, 24, "#f7f7f7"], [14, 19, 75, 14, G1], [14, 52, 135, 24, "#f7f7f7"], [14, 57, 120, 14, G1], [14, 90, 120, 24, "#f7f7f7"], [14, 95, 63, 14, G1], [98, 14, 3, 24, "#bbb"], [119, 52, 3, 24, "#bbb"], [137, 90, 3, 24, "#bbb"]])}
  </TH>,
  <TH key="23">{([[47, 82, 29, G2], [135, 48, 20, O2], [90, 64, 18, O2], [77, 33, 15, G2], [48, 40, 11, G1], [106, 35, 9, G2], [119, 80, 12, O1], [89, 98, 13, G1]] as const).map(([x, y, r, c], i) => <circle key={i} cx={x} cy={y} r={r} fill={c} />)}</TH>,
];

const menu = ["File", "Data", "Worksheet", "Dashboard", "Story", "Analysis", "Map", "Format", "Server", "Window", "Help"];
const topFields: [React.ReactNode, string, boolean?][] = [
  [<Svg key="a" w={17} h={12}><path d="M0 5h3M0 7.500h3" stroke="#4f8fae" /><g transform="translate(4 0)"><circle cx="6.500" cy="6" r="5.200" stroke="#4f8fae" /><ellipse cx="6.500" cy="6" rx="2.300" ry="5.200" stroke="#4f8fae" /><path d="M1.500 4h10M1.500 8h10" stroke="#4f8fae" strokeWidth=".8" /></g></Svg>, "(Location 1)"],
  [<Globe key="b" s={13} />, "(Location1)Dwarka n"],
  [<BinIcon key="c" />, "Hospital (bin)"],
  [<BinIcon key="d" />, "Maintenance Staff (bin)"],
  [<BinIcon key="e" />, "Multiple fields (bin)"],
  [<Hash key="f" />, "ttty"],
  [<AbcIcon key="g">Abc</AbcIcon>, "Measure Names", true],
];
const measures = ["24X7Security", "AC", "Area", "ATM", "BED", "Cafeteria", "Car Parking", "Children'splayarea", "Club House", "Dining Table", "Gasconnection", "Golf Course", "Gymnasium", "Hospital", "Indoor Games"];
const sheets: [number, string][] = [[57, "Sheet 2"], [57, "Sheet 3"], [57, "Sheet 4"], [57, "Sheet 5"], [57, "Sheet 6"], [56, "Sheet 7"], [57, "Sheet 8"], [57, "Sheet 9"]];
const dashes: [number, string][] = [[102, "Dashboard 1"], [104, "Dashboard 2"], [104, "Dashboard 3"], [104, "Dashboard 4"]];
const DashIcon = () => <Svg w={12}><rect x=".5" y=".5" width="11" height="11" stroke="#777" /><path d="M6 .5v11M.5 6h11" stroke="#777" /></Svg>;
const BookIcon = () => <Svg w={12}><path d="M6 2.500L1 .8v9.200l5 1.500 5-1.500V.8zM6 2.500v9" stroke="#777" /></Svg>;
const Nav: React.FC<{ d: string }> = ({ d }) => <Svg w={8} h={9}><path d={d} fill="#c8c8c8" /></Svg>;

const EdgeNew = () => (
  <Svg w={24}><circle cx="12" cy="12" r="11" fill="#0f7cc4" /><path d="M1 12C3 5 16 3 21 10c2 4-1 7-6 7-3 0-4-2-3-3 3 1 5-1 3-3C11 7 4 9 1 12z" fill="#35c9a0" /><path d="M6 16c1 4 8 7 14 2" stroke="#7be05f" strokeWidth="1.500" /></Svg>
);
const Chrome = () => (
  <Svg w={24}><path d="M12 1a11 11 0 019.500 5.500H12a5.500 5.500 0 00-5 3L3.500 5A11 11 0 0112 1z" fill="#ea4335" /><path d="M21.500 6.500A11 11 0 0112 23l4.800-8.200a5.500 5.500 0 00.2-8.300z" fill="#fbbc05" /><path d="M3.500 5L8 13a5.500 5.500 0 006 4.200L12 23A11 11 0 013.500 5z" fill="#34a853" /><circle cx="12" cy="12" r="4.500" fill="#4285f4" stroke="#fff" /></Svg>
);
const Explorer = () => (
  <Svg w={24} h={22}><path d="M1 2h8l2 3h12v16H1z" fill="#f7d774" /><rect x="1" y="5" width="22" height="2" fill="#e8b93b" /><path d="M7 20v-7h10v7h-3v-4h-4v4z" fill="#3fa7e0" /></Svg>
);
const Store = () => (
  <Svg w={24}><path d="M8 6V4a4 4 0 018 0v2" stroke="#ddd" /><rect x="2" y="6" width="20" height="18" rx="1" fill="#f4f4f4" /><rect x="7" y="10" width="4.500" height="4.500" fill="#f25022" /><rect x="12.500" y="10" width="4.500" height="4.500" fill="#7fba00" /><rect x="7" y="15.500" width="4.500" height="4.500" fill="#00a4ef" /><rect x="12.500" y="15.500" width="4.500" height="4.500" fill="#ffb900" /></Svg>
);
const Mail = () => (
  <Svg w={24} h={20}><path d="M0 6L12 0l12 6v14H0z" fill="#f6f6f6" /><path d="M0 6l12 7 12-7-12 3z" fill="#111" /></Svg>
);

export default function App() {
  return (
    <Page>
      <Global />
      <TitleBar>
        <TitleLogo><TableauLogo s={15} c="#3f7ea6" /></TitleLogo>
        <TitleText>Tableau - SWETHA PROJECT - Tableau license expires in 3 days</TitleText>
        <WinControls>
          <WinBtn><Svg w={10}><path d="M0 5.500h10" stroke="#222" /></Svg></WinBtn>
          <WinBtn><Svg w={10}><rect x=".5" y="2.500" width="7" height="7" stroke="#222" /><path d="M2.500 2.500V.5h7v7h-2" stroke="#222" /></Svg></WinBtn>
          <WinBtn><Svg w={11}><path d="M.5.5l10 10M10.500.5l-10 10" stroke="#222" /></Svg></WinBtn>
        </WinControls>
      </TitleBar>
      <MenuBar>{menu.map(m => <span key={m}>{m}</span>)}</MenuBar>
      <Toolbar>
        <Slot $w={32}><Home /></Slot>
        <Sep $ml={7} $mr={6} />
        <Slot $w={32}><Back /></Slot>
        <Slot $w={32}><Fwd /></Slot>
        <Slot $w={26}><Loop /></Slot>
        <Slot $w={16}><Caret /></Slot>
        <Slot $w={26}><Save /></Slot>
        <Slot $w={38}><NewDs /></Slot>
        <Slot $w={24}><PauseDs /></Slot>
        <Slot $w={16}><Caret /></Slot>
        <Slot $w={22}><Refresh /></Slot>
        <Slot $w={20}><Caret $c="#bbb" /></Slot>
        <Sep $ml={3} $mr={10} />
        <Slot $w={20}><NewWs /></Slot>
        <Slot $w={20}><Caret /></Slot>
        <Slot $w={23}><Dup /></Slot>
        <Slot $w={24} $ml={7}><Clear /></Slot>
        <Slot $w={16}><Caret /></Slot>
        <Sep $ml={5} $mr={4} />
        <Slot $w={35}><Swap /></Slot>
        <Slot $w={30}><SortA /></Slot>
        <Slot $w={34}><SortD /></Slot>
        <Sep $ml={6} $mr={5} />
        <Slot $w={20} $ml={7}><Marker /></Slot>
        <Slot $w={14}><Caret /></Slot>
        <Slot $w={27}><Clip /></Slot>
        <Slot $w={12}><Caret $c="#bbb" /></Slot>
        <Slot $w={30} $ml={2} $on><TBox s={17} c="#333" /></Slot>
        <Slot $w={28}><Pin /></Slot>
        <Combo><Caret $c="#ccc" /></Combo>
        <Sep $ml={15} $mr={0} />
        <Slot $w={21} $ml={12}><Cards /></Slot>
        <Slot $w={14}><Caret /></Slot>
        <Slot $w={17} $ml={6}><Present /></Slot>
        <Sep $ml={15} $mr={0} />
        <Slot $w={15} $ml={15}><Share /></Slot>
        <Slot $w={18} $ml={285}><SignPost /></Slot>
      </Toolbar>
      <ShowMeTab>
        <Svg w={15} h={17}><rect y="1" width="11" height="3" fill="#7b6a98" /><rect y="5" width="14" height="3" fill="#7f9fc6" /><rect y="9" width="5" height="3" fill="#f5a67a" /><rect y="13" width="8" height="3" fill="#f76f84" /></Svg>
        Show Me
      </ShowMeTab>
      <Workspace>
        <DataPane>
          <PaneTabs>
            <PaneTab $on $w={77}>Data</PaneTab>
            <PaneTab $w={132}>Analytics<Chevron><Svg w={8} h={12}><path d="M6.500 1.500L2 6l4.500 4.500" stroke="#555" /></Svg></Chevron></PaneTab>
          </PaneTabs>
          <Sources>
            <SourceRow $on>
              <Svg w={14} h={16}><Cyl c="#777" /><circle cx="11" cy="12.500" r="3.200" fill="#3d87a8" /><path d="M9.500 12.500l1 1 2-2" stroke="#fff" /></Svg>
              Bangalore
            </SourceRow>
            <SourceRow>
              <Svg w={14} h={16}><ellipse cx="7" cy="3.500" rx="5.500" ry="2.500" stroke="#777" /><path d="M1.500 3.500v11h11v-11" stroke="#777" /></Svg>
              Bangalore (1)
            </SourceRow>
          </Sources>
          <SearchRow>
            <SearchBox>Search<Magnifier s={11} /></SearchBox>
            <Slot $w={24}><Svg w={14} h={14}><path d="M.5 1h13L8.500 7v6l-3-2V7z" stroke="#666" /></Svg></Slot>
            <Sep $ml={0} $mr={0} />
            <Slot $w={24}><Svg w={13} h={10}><path d="M0 .5h3M0 3.500h3M0 6.500h3M0 9.500h3M4 .5h9M4 3.500h9M4 6.500h9M4 9.500h9" stroke="#666" /></Svg></Slot>
            <Slot $w={10}><Caret /></Slot>
          </SearchRow>
          <TablesHead>Tables</TablesHead>
          <FieldArea>
            <FieldList>
              {topFields.map(([ic, t, it]) => (
                <FieldRow key={t} $i={it}><FieldIcon>{ic}</FieldIcon>{t}</FieldRow>
              ))}
              <FieldDivider />
              {measures.map(m => <FieldRow key={m}><FieldIcon><Hash /></FieldIcon>{m}</FieldRow>)}
            </FieldList>
            <ScrollBar>
              <ScrollEnd><Svg w={9} h={6}><path d="M1 5l3.500-3.500L8 5" stroke="#555" strokeWidth="1.500" /></Svg></ScrollEnd>
              <ScrollThumb />
              <ScrollRest />
              <ScrollEnd><Svg w={9} h={6}><path d="M1 1l3.500 3.500L8 1" stroke="#555" strokeWidth="1.500" /></Svg></ScrollEnd>
            </ScrollBar>
          </FieldArea>
        </DataPane>
        <ShelfCol>
          <Card $h={62}><CardTitle>Pages</CardTitle></Card>
          <Card $h={78}>
            <CardTitle>Filters</CardTitle>
            <FilterPillWrap><Pill $c="g" $w={144}>Longitude (generate..</Pill></FilterPillWrap>
          </Card>
          <Card $h={241}>
            <CardTitle>Marks</CardTitle>
            <MarkType><MarkCircle />Automatic<MarkDrop><Caret /></MarkDrop></MarkType>
            <MarkGrid>
              <MarkBtn><Dots4 />Color</MarkBtn>
              <MarkBtn><Svg w={15}><circle cx="9.500" cy="6" r="5" stroke="#666" /><circle cx="3.500" cy="11" r="3" stroke="#666" /></Svg>Size</MarkBtn>
              <MarkBtn><TBox />Label</MarkBtn>
              <MarkBtn><Svg w={15} h={12}><circle cx="7.500" cy="2" r="1.700" fill="#666" /><circle cx="2" cy="9" r="1.700" stroke="#666" /><circle cx="7.500" cy="9" r="1.700" stroke="#666" /><circle cx="13" cy="9" r="1.700" stroke="#666" /></Svg>Detail</MarkBtn>
              <MarkBtn><Svg w={15} h={14}><path d="M.5.5h14v9h-3v4l-4-4H.5z" stroke="#666" /></Svg>Tooltip</MarkBtn>
            </MarkGrid>
            <MarkPills>
              <MarkPillRow><MarkPillIcon><Dots4 /></MarkPillIcon><Pill $c="b" $w={111}>(Location 1)</Pill></MarkPillRow>
              <MarkPillRow><MarkPillIcon><TBox /></MarkPillIcon><Pill $c="b" $w={111}>(Location1)Dw..</Pill></MarkPillRow>
            </MarkPills>
          </Card>
        </ShelfCol>
        <Right>
          <Shelf $mb={6}>
            <ShelfLabel><Svg w={11} h={11}><path d="M1.500 3v8M5.500 3v8M9.500 3v8M1.500 0v1.500M5.500 0v1.500M9.500 0v1.500" stroke="#555" strokeWidth="2" /></Svg>Columns</ShelfLabel>
            <ShelfPills><Pill $c="g" $w={148}>Longitude (generated)</Pill></ShelfPills>
          </Shelf>
          <Shelf $mb={6}>
            <ShelfLabel><Svg w={12} h={10}><path d="M0 1h2M3 1h9M0 5h2M3 5h9M0 9h2M3 9h9" stroke="#555" strokeWidth="1.500" /></Svg>Rows</ShelfLabel>
            <ShelfPills><Pill $c="g" $w={148}>Latitude (generated)</Pill></ShelfPills>
          </Shelf>
          <View>
            <ViewTitle>HOUSE PRICES PREDICTION IN INDIA</ViewTitle>
            <MapFrame>
              <WorldMap />
              <MapToolSearch><Magnifier s={13} /></MapToolSearch>
              <MapToolGroup>
                <ToolCell $h={26}><Svg w={11}><path d="M5.500 1v9M1 5.500h9" stroke="#555" strokeWidth="2" /></Svg></ToolCell>
                <ToolCell $h={22} $box><Svg w={11}><path d="M1 5.500h9" stroke="#bbb" strokeWidth="2" /></Svg></ToolCell>
                <ToolCell $h={25}><Pin c="#666" /></ToolCell>
                <ToolRule />
                <ToolCell $h={26}><Svg w={8} h={10}><path d="M1 0l6 5-6 5z" fill="#555" /></Svg></ToolCell>
              </MapToolGroup>
              <Attribution>© 2023 Mapbox © OpenStreetMap</Attribution>
              <Unknown>302 unknown</Unknown>
            </MapFrame>
          </View>
        </Right>
      </Workspace>
      <ShowMePanel>
        <ThumbGrid>{thumbs}</ThumbGrid>
        <HintHead>For <Strong>symbol maps</Strong> try</HintHead>
        <HintRow><HintLabel $w={53}>1 geo <HintGlobe><Globe c="#777" s={11} /></HintGlobe></HintLabel><HintPill $c="b" $w={84}>Dimension</HintPill></HintRow>
        <HintRow><HintLabel $w={57}>0 or more</HintLabel><HintPill $c="b" $w={90}>Dimensions</HintPill></HintRow>
        <HintRow><HintLabel $w={34}>0 to 2</HintLabel><HintPill $c="g" $w={79}>Measures</HintPill></HintRow>
        <Note>May use spatial measure in place of geo dimension</Note>
      </ShowMePanel>
      <SheetTabs>
        <SourceTab $w={131}><Svg w={10} h={13}><ellipse cx="5" cy="2.500" rx="4.500" ry="2" stroke="#777" /><path d="M.5 2.500v8c0 2 9 2 9 0v-8" stroke="#777" /></Svg>Data Source</SourceTab>
        <SheetTab $w={56} $on>Sheet 1</SheetTab>
        {sheets.map(([w, t]) => <SheetTab key={t} $w={w}>{t}</SheetTab>)}
        {dashes.map(([w, t]) => <SheetTab key={t} $w={w}><DashIcon />{t}</SheetTab>)}
        <SheetTab $w={71}><BookIcon />Story 1</SheetTab>
        <SheetTab $w={32}><Svg w={16}><rect x=".5" y=".5" width="10" height="11" stroke="#777" /><path d="M3 9V6M5.500 9V3M8 9V5" stroke="#777" /><path d="M12 9v6M9 12h6" stroke="#555" strokeWidth="1.500" /></Svg></SheetTab>
        <SheetTab $w={32}><Svg w={16}><rect x=".5" y=".5" width="10" height="11" stroke="#777" /><path d="M5.500.5v11M.5 6h10" stroke="#777" /><path d="M12 9v6M9 12h6" stroke="#555" strokeWidth="1.500" /></Svg></SheetTab>
        <SheetTab $w={32}><Svg w={16}><path d="M5.500 2L.5.5v10l5 1.500 5-1.500V.5zM5.500 2v10" stroke="#777" /><path d="M12 9v6M9 12h6" stroke="#555" strokeWidth="1.500" /></Svg></SheetTab>
      </SheetTabs>
      <StatusBar>
        <StatusText $w={58}>0 marks</StatusText>
        <StatusText $w={941}>1 row by 1 column</StatusText>
        <StatusCell $w={127} />
        <StatusCell $w={27} />
        <StatusCell $w={27} />
        <StatusCell $w={47} />
        <StatusCell $w={71}>
          <Nav d="M0 0h1.500v9H0zM8 0v9L2.500 4.500z" /><Nav d="M7 0v9L1.500 4.500z" /><Nav d="M1 0v9l5.500-4.500z" /><Nav d="M0 0v9l5.500-4.500zM6.500 0H8v9H6.500z" />
        </StatusCell>
        <StatusCell $w={68}>
          <Svg w={12}><path d="M0 0h3v3H0zM4.500 0h3v3h-3zM9 0h3v3H9zM0 4.500h3v3H0zM4.500 4.500h3v3h-3zM9 4.500h3v3H9zM0 9h3v3H0zM4.500 9h3v3h-3zM9 9h3v3H9z" fill="#bdbdbd" /></Svg>
          <Svg w={12}><path d="M0 0h12v8H0zM0 9h3v3H0zM4.500 9h3v3h-3zM9 9h3v3H9z" fill="#b0b0b0" /></Svg>
          <Svg w={11} h={14}><rect width="11" height="14" fill="#707070" /></Svg>
        </StatusCell>
      </StatusBar>
      <Taskbar>
        <StartBtn><Svg w={16}><path d="M0 2.300L6.500 1.400V7.500H0zM7.500 1.300L16 0V7.500H7.500zM0 8.500H6.500V14.600L0 13.700zM7.500 8.500H16V16L7.500 14.700z" fill="#fff" /></Svg></StartBtn>
        <TaskSearch>
          <Cortana />Type here to search
          <MicWrap><Svg w={12} h={18}><rect x="3.500" y=".5" width="5" height="11" rx="2.500" stroke="#999" /><path d="M1 8c0 7 10 7 10 0M6 14v3M3 17.500h6" stroke="#999" /></Svg></MicWrap>
        </TaskSearch>
        <TaskIcon $w={48}><Svg w={20} h={16}><rect x="4.500" y=".5" width="11" height="15" stroke="#fff" /><path d="M2.500 3H.5v10h2M17.500 3h2v10h-2" stroke="#fff" /></Svg></TaskIcon>
        <TaskIcon $w={50} $ml={2}><FaEdgeLegacy size={22} color="#0b78d7" /></TaskIcon>
        <TaskIcon $w={46}><Explorer /></TaskIcon>
        <TaskIcon $w={52}><Store /></TaskIcon>
        <TaskIcon $w={48}><Mail /></TaskIcon>
        <TaskIcon $w={50}><EdgeNew /></TaskIcon>
        <TaskIcon $w={48}><VscVscode size={24} color="#1f9cf0" /></TaskIcon>
        <TaskIcon $w={50}><Chrome /></TaskIcon>
        <TaskIcon $w={48}><FaSpotify size={25} color="#1ed760" /></TaskIcon>
        <TaskIcon $w={48} $ml={1} $on><Svg w={24}><rect width="24" height="24" fill="#eef2f5" /><foreignObject width="24" height="24"><TableauLogo s={24} c="#3f7ea6" /></foreignObject></Svg></TaskIcon>
        <Tray>
          <TrayIcon $w={24}><Svg w={12} h={7}><path d="M.5 6.500L6 1l5.500 5.500" stroke="#fff" /></Svg></TrayIcon>
          <TrayIcon $w={26}><Svg w={16} h={10}><rect x=".5" y=".5" width="13" height="9" stroke="#fff" /><rect x="2" y="2" width="5" height="6" fill="#fff" /><rect x="14" y="3" width="2" height="4" fill="#fff" /></Svg></TrayIcon>
          <TrayIcon $w={24}><Svg w={14}><path d="M1 13A12 12 0 0113 1M4 13A9 9 0 0113 4M7 13A6 6 0 0113 7" stroke="#ddd" /><circle cx="12" cy="12" r="1.500" fill="#fff" /></Svg></TrayIcon>
          <TrayIcon $w={20}><Svg w={15}><path d="M1 5h2.500L7 2v11L3.500 10H1z" stroke="#fff" /><path d="M9.500 5a4 4 0 010 5M11.500 3a7 7 0 010 9" stroke="#fff" /></Svg></TrayIcon>
          <Clock>2:20 PM<br />10/19/2023</Clock>
          <Notify><Svg w={16}><path d="M.5 1h15v11h-4.500l-3 3v-3H.5z" stroke="#fff" /></Svg></Notify>
        </Tray>
      </Taskbar>
    </Page>
  );
}
